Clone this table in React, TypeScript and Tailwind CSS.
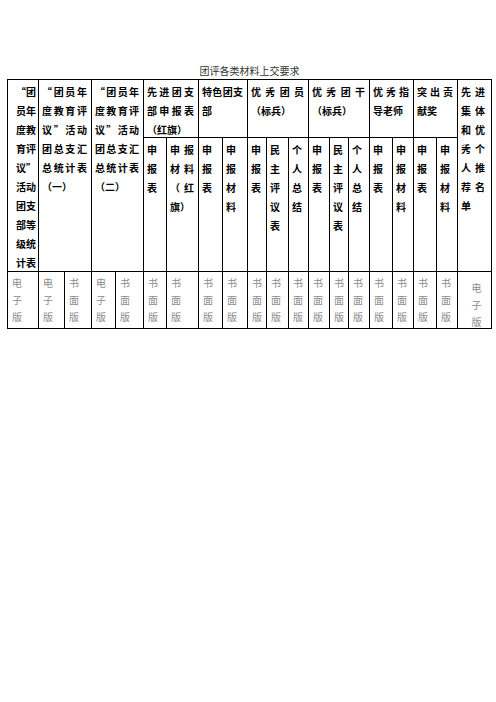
import { ReactNode } from 'react';

type Cell = { lines: string[]; cls?: string; spread?: boolean };

const top: Cell[] = [
  {
    lines: ['“团', '员年', '度教', '育评', '议”', '活动', '团支', '部等', '级统', '计表'],
    cls: 'row-span-2 pl-[8px]',
    spread: false,
  },
  {
    lines: ['“团员年', '度教育评', '议”活动', '团总支汇', '总统计表', '（一）'],
    cls: 'col-span-2 row-span-2',
  },
  {
    lines: ['“团员年', '度教育评', '议”活动', '团总支汇', '总统计表', '（二）'],
    cls: 'col-span-2 row-span-2',
  },
  { lines: ['先进团支', '部申报表', '（红旗）'], cls: 'col-span-2' },
  { lines: ['特色团支', '部'], cls: 'col-span-2' },
  { lines: ['优秀团员', '（标兵）'], cls: 'col-span-3' },
  { lines: ['优秀团干', '（标兵）'], cls: 'col-span-3' },
  { lines: ['优秀指', '导老师'], cls: 'col-span-2' },
  { lines: ['突出贡', '献奖'], cls: 'col-span-2' },
  { lines: ['先进', '集体', '和优', '秀个', '人推', '荐名', '单'], cls: 'row-span-2 pr-[6px]' },
];

const form = ['申', '报', '表'];
const material = ['申', '报', '材', '料'];
const vote = ['民', '主', '评', '议', '表'];
const summary = ['个', '人', '总', '结'];

const subs: string[][] = [
  form,
  ['申报', '材料', '（红', '旗）'],
  form,
  material,
  form,
  vote,
  summary,
  form,
  vote,
  summary,
  form,
  material,
  form,
  material,
];

const digital = ['电', '子', '版'];
const paper = ['书', '面', '版'];
const bottom = [digital, digital, paper, digital, paper, ...Array(14).fill(paper)];

function Line({ text, spread }: { text: string; spread: boolean }) {
  if (!spread || text.length < 2) return <div className="whitespace-nowrap">{text}</div>;
  return (
    <div className="flex justify-between whitespace-nowrap">
      {Array.from(text).map((c, i) => (
        <span key={i}>{c}</span>
      ))}
    </div>
  );
}

const Head = ({ lines, cls = '', spread = true }: Cell) => (
  <div className={`bg-white pl-[3px] pr-[4px] pt-[2px] font-bold leading-[19px] text-black ${cls}`}>
    {lines.map((l, i) => (
      <Line key={i} text={l} spread={spread && i < lines.length - 1} />
    ))}
  </div>
);

const Foot = ({ children, cls = '' }: { children: ReactNode; cls?: string }) => (
  <div className={`bg-white pl-[4px] pt-[2px] leading-[17px] text-[#8c8c8c] ${cls}`}>{children}</div>
);

export default function App() {
  return (
    <div
      lang="zh-CN"
      className="min-h-[702px] bg-white pl-[7px] pt-[62px] font-['Noto_Sans_CJK_SC',sans-serif] text-[10px] [text-spacing-trim:space-all]"
    >
      <div className="w-[485px]">
        <div className="h-[17px] text-center leading-[17px] text-[#333]">团评各类材料上交要求</div>

        <div className="grid w-fit grid-cols-[30px_25px_26px_23px_27px_22px_31px_23px_24px_18px_21px_19px_20px_18px_20px_22px_20px_22px_20px_33px] grid-rows-[57px_133px_56px] gap-px border border-black bg-black">
          {top.map((c, i) => (
            <Head key={i} {...c} />
          ))}

          {subs.map((l, i) => (
            <Head key={i} lines={l} />
          ))}

          {bottom.map((l, i) => (
            <Foot key={i}>
              {l.map((c: string, j: number) => (
                <div key={j}>{c}</div>
              ))}
            </Foot>
          ))}
          <Foot cls="pl-0 pt-[7px] text-center leading-[15px]">
            {digital.map((c, j) => (
              <div key={j}>{c}</div>
            ))}
          </Foot>
        </div>
      </div>
    </div>
  );
}
